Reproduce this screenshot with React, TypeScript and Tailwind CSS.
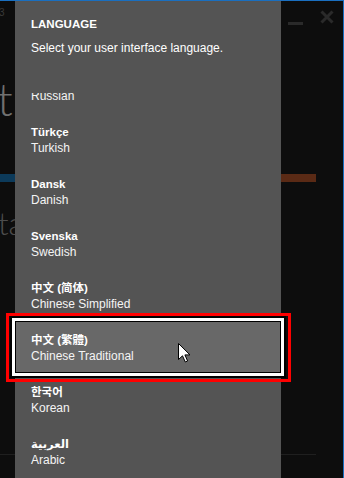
import React from "react";

type Item = { name: string; en: string; font?: string; selected?: boolean };

const FONT = '"Liberation Sans", "Noto Sans CJK SC", "DejaVu Sans", sans-serif';

const items: Item[] = [
  { name: "Русский", en: "Russian" },
  { name: "Türkçe", en: "Turkish" },
  { name: "Dansk", en: "Danish" },
  { name: "Svenska", en: "Swedish" },
  { name: "中文 (简体)", en: "Chinese Simplified" },
  {
    name: "中文 (繁體)",
    en: "Chinese Traditional",
    font: '"Liberation Sans", "Noto Sans CJK TC", sans-serif',
    selected: true,
  },
  { name: "한국어", en: "Korean", font: '"Liberation Sans", "Noto Sans CJK KR", sans-serif' },
  { name: "العربية", en: "Arabic", font: '"Liberation Sans", "DejaVu Sans", sans-serif' },
  { name: "Português", en: "Portuguese" },
];

function ItemText({ item }: { item: Item }) {
  return (
    <>
      <div
        className="text-[11.5px] font-bold leading-4 text-white whitespace-nowrap"
        style={item.font ? { fontFamily: item.font } : undefined}
      >
        {item.name}
      </div>
      <div className="text-[12px] leading-[17px] text-[#f4f4f4] whitespace-nowrap">{item.en}</div>
    </>
  );
}

export default function App() {
  return (
    <div
      className="relative flex h-[478px] w-[344px] overflow-hidden border-t border-[#1a6fc0] bg-[#0d0d0d]"
      style={{ fontFamily: FONT }}
    >
      {/* left window strip */}
      <div className="flex w-[15px] shrink-0 flex-col overflow-hidden">
        <div className="-ml-px mt-[7px] text-[10px] leading-[10px] text-[#3a3a3a]">3</div>
        <div
          className="-ml-[3px] mt-[58px] text-[46px] font-light leading-[46px] text-[#707070] whitespace-nowrap"
          style={{ fontFamily: "Lato, sans-serif" }}
        >
          t
        </div>
        <div className="mt-[52px] h-[8px] w-full bg-[#0c3a5a]" />
        <div
          className="-ml-[2px] mt-[26px] text-[31px] font-light leading-[31px] text-[#4c4c4c] whitespace-nowrap"
          style={{ fontFamily: "Lato, sans-serif" }}
        >
          ta
        </div>
        <div className="mt-[215px] h-px w-full bg-[#1f1f1f]" />
      </div>

      {/* language panel */}
      <div className="relative z-10 flex w-[266px] shrink-0 flex-col bg-[#545454]">
        <div className="pl-4 pt-[15px]">
          <div className="text-[11.5px] font-bold leading-4 text-white">LANGUAGE</div>
          <div className="mt-2 text-[12px] leading-4 text-white">Select your user interface language.</div>
        </div>
        <div className="mt-[37px] min-h-0 flex-1 overflow-y-clip">
          <div className="-mt-[33px] flex flex-col">
            {items.map((item) =>
              item.selected ? (
                <div key={item.en} className="-mx-[5px] -mb-[6px] -mt-1 h-[62px] border-2 border-black">
                  <div className="h-full border-[3px] border-white">
                    <div className="h-full border border-black bg-[#686868] pl-[15px] pt-[10px]">
                      <ItemText item={item} />
                    </div>
                  </div>
                </div>
              ) : (
                <div key={item.en} className="h-[52px] shrink-0 pl-4 pt-3">
                  <ItemText item={item} />
                </div>
              )
            )}
          </div>
        </div>
      </div>

      {/* right window strip */}
      <div className="flex flex-1 flex-col border-r border-[#1a6fc0]">
        <div className="flex items-start pl-[7px]">
          <div className="mt-[21px] h-[3px] w-[15px] bg-[#2a2a2a]" />
          <svg className="ml-[17px] mt-[9px]" width="14" height="14" viewBox="0 0 14 14">
            <path d="M1.5 1.5 L12.5 12.5 M12.5 1.5 L1.5 12.5" stroke="#2a2a2a" strokeWidth="3" />
          </svg>
        </div>
        <div className="mt-[149px] h-[8px] w-[35px] bg-[#5a2a15]" />
        <div className="mt-[272px] h-px w-[35px] bg-[#1f1f1f]" />
      </div>

      {/* red annotation box */}
      <div className="pointer-events-none absolute left-[6px] top-[312px] z-20 h-[69px] w-[285px] border-[3px] border-[#ff0000]" />

      {/* mouse cursor */}
      <svg
        className="pointer-events-none absolute left-[178px] top-[342px] z-30"
        width="13"
        height="20"
        viewBox="0 0 13 20"
      >
        <path
          d="M0.5 0.5 L0.5 16.5 L4.5 12.8 L7.3 19 L9.6 18 L6.9 11.9 L12 11.9 Z"
          fill="#ffffff"
          stroke="#000000"
          strokeWidth="1"
          strokeLinejoin="miter"
        />
      </svg>
    </div>
  );
}
